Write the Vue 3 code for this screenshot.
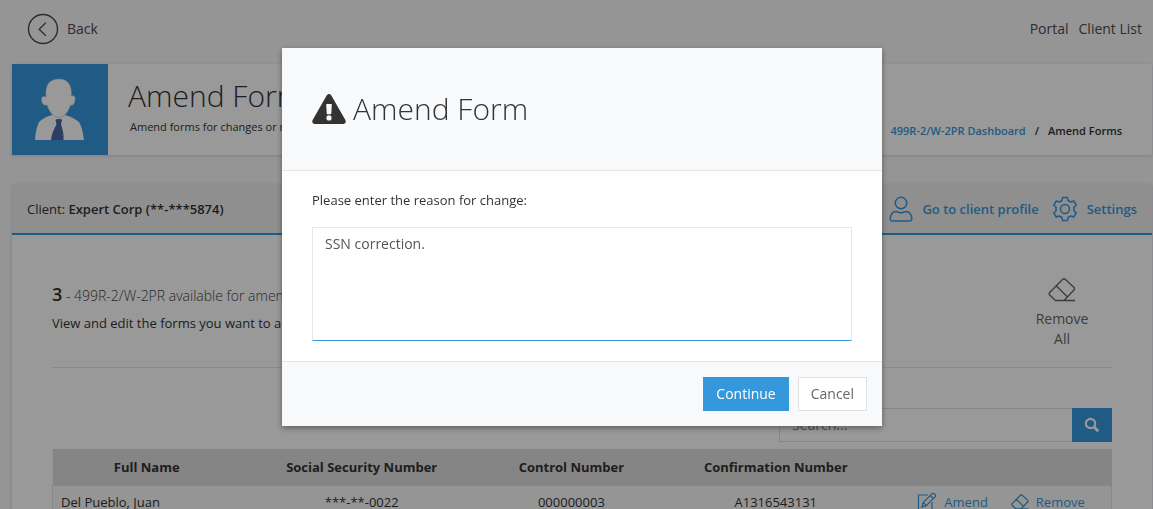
<script setup>
import { ref } from 'vue'

const reason = ref('SSN correction.')
const query = ref('')
const rows = ref([
  { name: 'Del Pueblo, Juan', ssn: '***-**-0022', control: '000000003', confirmation: 'A1316543131' }
])
</script>

<template>
  <div class="app">
    <div class="page">
      <header class="topbar">
        <a href="#" class="back">
          <svg width="32" height="32" viewBox="0 0 32 32" fill="none" stroke="currentColor">
            <circle cx="16" cy="16" r="14.5" stroke-width="1.4" />
            <path d="M18.8 9.7 12.2 16.2 18.8 22.7" stroke-width="1.3" />
          </svg>
          <span>Back</span>
        </a>
        <nav class="links">
          <a href="#">Portal</a>
          <a href="#">Client List</a>
        </nav>
      </header>

      <section class="hero">
        <div class="avatar">
          <svg width="96" height="91" viewBox="0 0 96 91">
            <path fill="#fff" d="M23 76C23.500 69 24.500 63 27 58C30 54.500 35 52.500 40 51L53 51C58 52.500 63 54.500 67 58C70 63 71 69 72 76Z" />
            <path fill="#fff" stroke="#b9c3cc" stroke-width=".5" d="M34 33C33 21 37 15 47 15C56 15 60 21 59.500 32C62 31 64 33 63 36C62.500 40 61 42 58.500 41C57 46 53 53.500 47 53.500C41 53.500 37 47 35 41C32 42 30 40 29.500 36C29 33 31 31.500 34 33Z" />
            <path fill="#4b67a6" d="M43.500 56 45 55H48.500L50 56 49 60.500C50.500 65 52 70 51.500 76H39C39.500 70 42 65 44.500 60.500Z" />
          </svg>
        </div>
        <div class="hero-text">
          <h1>Amend Forms</h1>
          <p>Amend forms for changes or mistakes</p>
        </div>
        <nav class="crumbs">
          <a href="#">499R-2/W-2PR Dashboard</a>
          <span>/</span>
          <span>Amend Forms</span>
        </nav>
      </section>

      <section class="panel">
        <div class="panel-head">
          <div>Client: <b>Expert Corp (**-***5874)</b></div>
          <nav class="panel-links">
            <a href="#">
              <svg width="24" height="28" viewBox="0 0 24 28" fill="none" stroke="currentColor" stroke-width="1.500">
                <circle cx="12" cy="8" r="5.700" />
                <path d="M6.500 16.500C4 16.500 1.200 19.500 1.200 24Q1.200 26 3.500 26H20.500Q22.800 26 22.800 24C22.800 19.500 20 16.500 17.500 16.500C15.500 16.500 15 17.700 12 17.700S8.500 16.500 6.500 16.500Z" />
              </svg>
              <span>Go to client profile</span>
            </a>
            <a href="#">
              <svg width="26" height="26" viewBox="0 0 26 26" fill="none" stroke="currentColor" stroke-width="1.500" stroke-linejoin="round">
                <circle cx="13" cy="13" r="4.500" />
                <path d="M10.500 1.500H15.500L16 4.500 18.800 6 21.700 5 24.200 9.200 21.900 11.200V14.800L24.200 16.800 21.700 21 18.800 20 16 21.500 15.500 24.500H10.500L10 21.500 7.200 20 4.300 21 1.800 16.800 4.100 14.800V11.200L1.800 9.200 4.300 5 7.200 6 10 4.500Z" />
              </svg>
              <span>Settings</span>
            </a>
          </nav>
        </div>

        <div class="panel-body">
          <div class="summary">
            <div>
              <h2><b>3</b> - 499R-2/W-2PR available for amendment</h2>
              <p>View and edit the forms you want to amend.</p>
            </div>
            <button type="button" class="remove-all">
              <svg width="28" height="26" viewBox="0 0 28 26" fill="none" stroke="currentColor" stroke-width="1.400" stroke-linejoin="round">
                <path d="M14.500 2.500Q16 1 17.500 2.500L26 10.500Q27 11.800 26 13L16 23.500H7.500L1.700 18Q.7 16.700 1.700 15.500ZM8.500 9 19.500 20M16 23.500H27" />
              </svg>
              <span>Remove All</span>
            </button>
          </div>

          <form class="search" @submit.prevent>
            <input v-model="query" type="text" placeholder="Search..." aria-label="Search" />
            <button type="submit" aria-label="Search">
              <svg width="16" height="16" viewBox="0 0 16 16" fill="none" stroke="currentColor">
                <circle cx="6.500" cy="6.500" r="4.700" stroke-width="2.200" />
                <path d="M10 10 14.300 14.300" stroke-width="3" />
              </svg>
            </button>
          </form>

          <table>
            <thead>
              <tr>
                <th class="c-name">Full Name</th>
                <th class="c-ssn">Social Security Number</th>
                <th class="c-control">Control Number</th>
                <th class="c-confirm">Confirmation Number</th>
                <th></th>
              </tr>
            </thead>
            <tbody>
              <tr v-for="row in rows" :key="row.control">
                <td class="left">{{ row.name }}</td>
                <td>{{ row.ssn }}</td>
                <td>{{ row.control }}</td>
                <td>{{ row.confirmation }}</td>
                <td>
                  <div class="actions">
                    <a href="#">
                      <svg width="20" height="20" viewBox="0 0 20 20" fill="none" stroke="currentColor" stroke-width="1.200">
                        <path d="M11 3H1.500V18.500H15V10M5 15 6.200 10.500 15 1.700Q16 .8 17.200 1.800L18 2.600Q19 3.800 18 4.800L9.300 13.600ZM13.200 3.500 16.300 6.600M6.200 10.500 9.300 13.600" />
                      </svg>
                      <span>Amend</span>
                    </a>
                    <a href="#">
                      <svg width="18" height="18" viewBox="0 0 28 26" fill="none" stroke="currentColor" stroke-width="1.900" stroke-linejoin="round">
                        <path d="M14.500 2.500Q16 1 17.500 2.500L26 10.500Q27 11.800 26 13L16 23.500H7.500L1.700 18Q.7 16.700 1.700 15.500ZM8.500 9 19.500 20M16 23.500H27" />
                      </svg>
                      <span>Remove</span>
                    </a>
                  </div>
                </td>
              </tr>
            </tbody>
          </table>
        </div>
      </section>
    </div>

    <div class="backdrop">
      <div class="modal" role="dialog" aria-modal="true" aria-labelledby="modal-title">
        <header class="modal-head">
          <svg width="34" height="30" viewBox="0 0 34 30">
            <path fill="#333" fill-rule="evenodd" d="M14.800 1.200Q17 -1 19.200 1.200L33.500 26.300Q34.500 29.500 31.500 30H2.500Q-.5 29.500.5 26.300ZM14.200 10.500 14.700 19.500Q14.800 20.300 15.600 20.300H18.400Q19.200 20.300 19.300 19.500L19.800 10.500Q19.700 10 19.200 10H14.800Q14.200 10 14.200 10.500ZM17 21.300A2.600 2.600 0 1 0 17 26.500 2.600 2.600 0 1 0 17 21.300Z" />
          </svg>
          <h3 id="modal-title">Amend Form</h3>
        </header>
        <div class="modal-body">
          <label for="reason">Please enter the reason for change:</label>
          <textarea id="reason" v-model="reason"></textarea>
        </div>
        <footer class="modal-foot">
          <button type="button" class="primary">Continue</button>
          <button type="button" class="plain">Cancel</button>
        </footer>
      </div>
    </div>
  </div>
</template>

<style>
body {
  background: #f8f8fb;
}
</style>

<style scoped>
* {
  box-sizing: border-box;
}

.app {
  height: 100vh;
  overflow: hidden;
  font: 13px/20px "Open Sans", sans-serif;
  color: #333;
}

.app h1,
.app h2,
.app h3,
.app p {
  margin: 0;
}

a {
  color: #3598dc;
  text-decoration: none;
}

button,
input,
textarea {
  font: inherit;
  margin: 0;
  border-radius: 0;
}

svg {
  display: block;
  flex: none;
}

.page {
  padding: 0 1px 0 12px;
}

.topbar {
  display: flex;
  justify-content: space-between;
  align-items: center;
  height: 64px;
  padding: 0 10px 6px 15px;
  font-size: 14px;
  font-weight: 500;
}

.topbar a {
  color: #4c4c4c;
}

.back {
  display: flex;
  align-items: center;
  gap: 8px;
}

.links {
  display: flex;
  gap: 10px;
}

.hero {
  display: flex;
  height: 91px;
  background: #fff;
  box-shadow: 0 1px 3px rgba(0, 0, 0, 0.15);
}

.avatar {
  width: 96px;
  background: #3598dc;
}

.hero-text {
  flex: 1;
  padding: 12px 20px;
}

.hero h1 {
  font-size: 30px;
  line-height: 40px;
  font-weight: 300;
}

.hero p {
  padding-left: 2px;
  font-size: 11px;
  line-height: 22px;
}

.crumbs {
  display: flex;
  align-items: center;
  gap: 9px;
  padding: 43px 30px 0 0;
  font-size: 11px;
  font-weight: 600;
}

.panel {
  margin-top: 29px;
  background: #fff;
  box-shadow: 0 1px 3px rgba(0, 0, 0, 0.15);
}

.panel-head {
  display: flex;
  justify-content: space-between;
  align-items: center;
  height: 51px;
  padding: 0 15px;
  background: #eee;
  border-bottom: 2px solid #3598dc;
}

.panel-head b {
  font-weight: 600;
}

.panel-links {
  display: flex;
  gap: 13px;
  font-weight: 600;
}

.panel-links a {
  display: flex;
  align-items: center;
  gap: 9px;
}

.panel-body {
  padding: 38px 40px 60px;
}

.summary {
  display: flex;
  justify-content: space-between;
  height: 95px;
  border-bottom: 1px solid #e5e5e5;
}

.summary h2 {
  padding-top: 8px;
  font-size: 14px;
  line-height: 26px;
  font-weight: 300;
  color: #444;
}

.summary h2 b {
  font-size: 18px;
  font-weight: 600;
  color: #333;
}

.summary p {
  padding-top: 4px;
}

.remove-all {
  display: flex;
  flex-direction: column;
  align-items: center;
  gap: 6px;
  width: 100px;
  padding: 4px 20px 0;
  border: 0;
  background: none;
  font-size: 14px;
  color: #666;
}

.search {
  display: flex;
  justify-content: flex-end;
  height: 34px;
  margin: 40px 0 7px;
}

.search input {
  width: 293px;
  padding: 6px 12px;
  border: 1px solid #e0e0e0;
  border-right: 0;
  background: #fff;
  font-size: 14px;
}

.search input::placeholder {
  color: #888;
}

.search button {
  display: flex;
  align-items: center;
  justify-content: center;
  width: 40px;
  padding: 0;
  border: 0;
  background: #3598dc;
  color: #fff;
}

table {
  width: 100%;
  table-layout: fixed;
  border-collapse: collapse;
  background: #f9f9f9;
}

th {
  height: 36px;
  padding: 0 8px;
  background: #dedede;
  font-weight: 700;
}

td {
  padding: 6px 8px;
  text-align: center;
}

tbody {
  border: 1px solid #e0e0e0;
}

.left {
  text-align: left;
}

.c-name {
  width: 17.8%;
}

.c-ssn {
  width: 22.8%;
}

.c-control {
  width: 16.8%;
}

.c-confirm {
  width: 21.8%;
}

.actions {
  display: flex;
  justify-content: center;
  gap: 23px;
}

.actions a {
  display: flex;
  align-items: center;
  gap: 7px;
}

.backdrop {
  position: fixed;
  inset: 0;
  padding: 48px 0 48px 11px;
  background: rgba(0, 0, 0, 0.4);
}

.modal {
  max-width: 600px;
  margin: 0 auto;
  background: #fff;
  box-shadow: 0 2px 6px rgba(0, 0, 0, 0.4);
}

.modal-head {
  display: flex;
  align-items: center;
  gap: 7px;
  padding: 41px 30px;
  background: #f8f9fb;
  border-bottom: 1px solid #e5e5e5;
}

.modal-head h3 {
  font-size: 30px;
  line-height: 40px;
  font-weight: 300;
}

.modal-body {
  padding: 19px 30px 20px;
}

.modal-body label {
  display: block;
  margin-bottom: 17px;
}

.modal-body textarea {
  display: block;
  width: 100%;
  height: 114px;
  padding: 6px 12px;
  border: 1px solid #e5e7ea;
  border-bottom-color: #3598dc;
  outline: 0;
  resize: none;
  font-size: 14px;
  color: #555;
}

.modal-foot {
  display: flex;
  justify-content: flex-end;
  gap: 9px;
  padding: 15px;
  background: #f8f9fb;
  border-top: 1px solid #e5e5e5;
}

.modal-foot button {
  padding: 6px 12px;
  border: 1px solid #e0e1e3;
  background: #fff;
  font-size: 14px;
  color: #666;
}

.modal-foot .primary {
  border-color: #3598dc;
  background: #3598dc;
  color: #fff;
}
</style>
